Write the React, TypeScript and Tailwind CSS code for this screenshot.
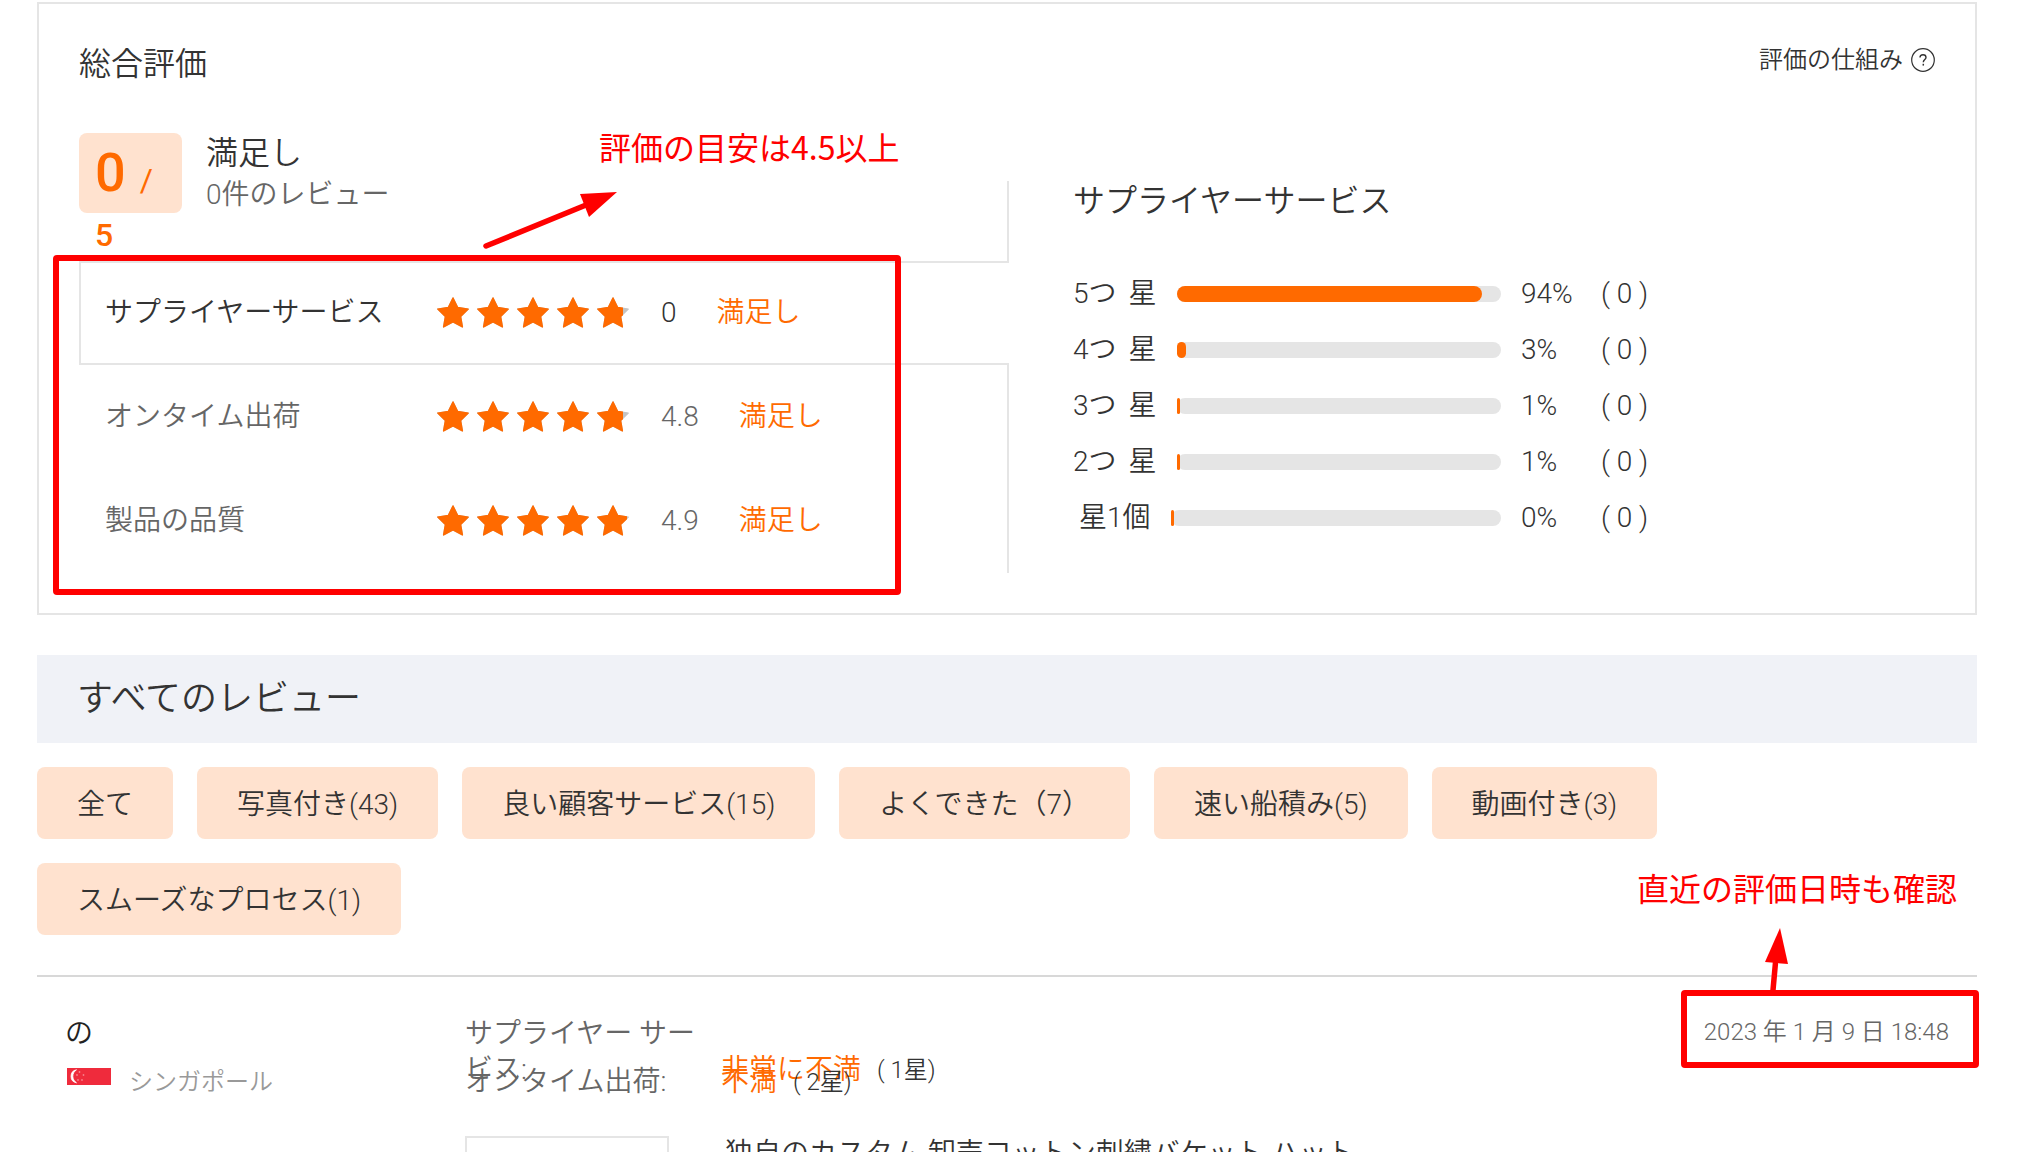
// src/pages/SupplierReviewsPage.tsx

import React from 'react';

// --- Data ---

const ratings = [
    { label: 'サプライヤーサービス', score: '0', text: '満足し', lastStar: 26, active: true },
    { label: 'オンタイム出荷', score: '4.8', text: '満足し', lastStar: 26, active: false },
    { label: '製品の品質', score: '4.9', text: '満足し', lastStar: 30, active: false },
];

const distribution = [
    { count: '5つ', unit: '星', percent: 94 },
    { count: '4つ', unit: '星', percent: 3 },
    { count: '3つ', unit: '星', percent: 1 },
    { count: '2つ', unit: '星', percent: 1 },
    { count: '星1個', unit: '', percent: 0 },
];

const filters = [
    '全て',
    '写真付き(43)',
    '良い顧客サービス(15)',
    'よくできた（7）',
    '速い船積み(5)',
    '動画付き(3)',
    'スムーズなプロセス(1)',
];

const reviewScores = [
    { label: 'サプライヤー サービス:', value: '非常に不満', stars: '( 1星)', offset: true },
    { label: 'オンタイム出荷:', value: '不満', stars: '( 2星)', offset: false },
];

// --- Icons ---

const STAR_POINTS = '16,1 20.7,10.5 31.2,12.1 23.6,19.5 25.4,29.9 16,25 6.6,29.9 8.4,19.5 0.8,12.1 11.3,10.5';

// fill is how much of the 32px star is coloured, from the left
const Star = ({ fill }: { fill: number }) => (
    <svg width="32" height="32" viewBox="0 0 32 32" aria-hidden="true">
        <polygon points={STAR_POINTS} fill="#c4c4c4" stroke="#c4c4c4" strokeWidth="1.4" strokeLinejoin="round" />
        <svg width={fill} height="32" viewBox={`0 0 ${fill} 32`}>
            <polygon points={STAR_POINTS} fill="#ff6a00" stroke="#ff6a00" strokeWidth="1.4" strokeLinejoin="round" />
        </svg>
    </svg>
);

const HelpIcon = () => (
    <svg width="24" height="24" viewBox="0 0 24 24" fill="none" stroke="#333333" aria-hidden="true">
        <circle cx="12" cy="12" r="11.3" strokeWidth="1.2" />
        <path d="M9 9.6C9 7.8 10.3 6.7 12 6.7S15 7.8 15 9.4C15 11.4 12.3 11.6 12.3 14.2" strokeWidth="1.4" />
        <path d="M12.3 15.8V17.6" strokeWidth="1.5" />
    </svg>
);

const SingaporeFlag = () => (
    <svg width="44" height="17" viewBox="0 0 44 17" role="img" aria-label="Singapore">
        <rect width="44" height="17" fill="#ef2b3c" />
        <path d="M9.5 1.8A6.6 6.6 0 0 0 9.5 14.8A7.6 7.6 0 0 1 9.5 1.8Z" fill="#ffffff" stroke="#ffffff" strokeWidth="0.8" />
        <g fill="#f67f89">
            <circle cx="12.5" cy="4" r="0.9" />
            <circle cx="16.5" cy="7" r="0.9" />
            <circle cx="15" cy="12" r="0.9" />
            <circle cx="11" cy="12" r="0.9" />
            <circle cx="10" cy="7" r="0.9" />
        </g>
    </svg>
);

// --- Sections ---

const RatingList = () => (
    <div className="relative">
        <ul>
            {ratings.map((item) => (
                <li
                    key={item.label}
                    className={
                        item.active
                            ? 'relative -mr-0.5 flex h-[104px] items-center border-2 border-r-0 border-[#e5e5e5] bg-white pl-6 text-[#333333]'
                            : 'flex h-[104px] items-center border-l-2 border-transparent pl-6 text-[#666666]'
                    }
                >
                    <span className="w-[332px] leading-10">{item.label}</span>
                    <span className="flex w-[224px] gap-2">
                        {[0, 1, 2, 3, 4].map((n) => (
                            <Star key={n} fill={n === 4 ? item.lastStar : 32} />
                        ))}
                    </span>
                    <span className="mr-10">{item.score}</span>
                    <span className="text-[#ff6a00]">{item.text}</span>
                </li>
            ))}
        </ul>
        {/* highlight frame */}
        <div className="absolute -top-1.5 -left-[26px] h-[340px] w-[848px] rounded-sm border-6 border-[#ff0000]"></div>
    </div>
);

const Distribution = () => (
    <div className="mt-12 w-1/2 border-l-2 border-[#e5e5e5] pl-16 text-[#333333]">
        <h3 className="text-[32px] leading-10">サプライヤーサービス</h3>
        <ul className="mt-[45px]">
            {distribution.map((row) => (
                <li key={row.count} className="flex h-14 items-center">
                    <div className="flex w-[428px] items-center">
                        <span className={row.unit ? 'mr-3' : 'ml-1.5'}>{row.count}</span>
                        <span>{row.unit}</span>
                        <div className="ml-5 h-4 flex-1 rounded-full bg-[#e5e5e5]">
                            <div
                                className="h-4 min-w-[3px] rounded-full bg-[#ff6a00]"
                                style={{ width: `${row.percent}%` }}
                            ></div>
                        </div>
                    </div>
                    <span className="ml-5 w-20">{row.percent}%</span>
                    <span>( 0 )</span>
                </li>
            ))}
        </ul>
    </div>
);

const Summary = () => (
    <section className="border-2 border-[#e5e5e5] px-10 pb-10">
        <div className="flex items-start justify-between pt-10 pb-[49px] text-[#333333]">
            <h2 className="text-[32px] leading-10">総合評価</h2>
            <a href="#help" className="flex items-center gap-2 text-2xl leading-8">
                評価の仕組み
                <HelpIcon />
            </a>
        </div>
        <div className="flex">
            <div className="relative w-1/2">
                <div className="flex h-32 items-start">
                    <div className="h-20 w-[103px] rounded-lg bg-[#ffe2cf] px-4 text-[32px] leading-11 font-medium text-[#ff6a00]">
                        <span className="mr-1.5 text-[54px] leading-[80px]">0</span> <span className="font-normal">/</span>
                        <br />5
                    </div>
                    <div className="ml-6">
                        <p className="text-[32px] leading-10 text-[#333333]">満足し</p>
                        <p className="leading-11 text-[#666666]">0件のレビュー</p>
                    </div>
                </div>
                <RatingList />
                <p className="absolute -top-[3px] left-[520px] font-['Noto_Sans_CJK_JP',sans-serif] text-[32px] leading-8 font-normal whitespace-nowrap text-[#ff0000]">
                    評価の目安は4.5以上
                </p>
                <svg className="absolute top-14 left-[400px]" width="142" height="62" viewBox="0 0 142 62" aria-hidden="true">
                    <path d="M7 57L107 16" stroke="#ff0000" strokeWidth="5.5" strokeLinecap="round" />
                    <polygon points="138,3 101,5 110,28" fill="#ff0000" />
                </svg>
            </div>
            <Distribution />
        </div>
    </section>
);

const Review = () => (
    <article className="relative mt-10 flex border-t-2 border-[#d8d8d8] px-7 pt-[39px]">
        <div className="w-[400px]">
            <p className="leading-9 text-[#222222]">の</p>
            <div className="mt-3 ml-0.5 flex items-start text-2xl leading-9 text-[#999999]">
                <span className="mt-1 mr-[18px]">
                    <SingaporeFlag />
                </span>
                シンガポール
            </div>
        </div>
        <div className="flex-1">
            <dl>
                {reviewScores.map((score) => (
                    <div key={score.label} className="flex h-12 items-start leading-9">
                        <dt className="w-60 text-[#666666]">{score.label}</dt>
                        <dd className={score.offset ? 'mt-9 ml-4 flex items-center' : 'ml-4 flex items-center'}>
                            <span className="text-[#ff6a00]">{score.value}</span>
                            <span className="ml-4 text-2xl leading-9 text-[#333333]">{score.stars}</span>
                        </dd>
                    </div>
                ))}
            </dl>
            <div className="mt-6 flex">
                <div className="h-[204px] w-[204px] border-2 border-[#e5e5e5]"></div>
                <a href="#product" className="ml-14 leading-9 text-[#333333]">
                    独自のカスタム 卸売コットン刺繍バケット ハット
                </a>
            </div>
        </div>
        <div className="relative self-start text-2xl leading-8 whitespace-nowrap text-[#666666]">
            <time dateTime="2023-01-09T18:48">2023 年 1 月 9 日 18:48</time>
            <div className="absolute -top-[26px] -right-[30px] h-[78px] w-[298px] rounded-sm border-6 border-[#ff0000]"></div>
            <p className="absolute -top-[149px] -right-2 font-['Noto_Sans_CJK_JP',sans-serif] text-[32px] leading-10 font-normal text-[#ff0000]">
                直近の評価日時も確認
            </p>
            <svg className="absolute -top-[91px] right-[156px]" width="32" height="68" viewBox="0 0 32 68" aria-hidden="true">
                <path d="M12 65L15 32" stroke="#ff0000" strokeWidth="5.5" strokeLinecap="round" />
                <polygon points="19,3 4,37 27,39" fill="#ff0000" />
            </svg>
        </div>
    </article>
);

// --- Page ---

const App = () => {
    return (
        <main
            lang="ja"
            className="h-screen overflow-hidden bg-white pt-0.5 pr-[45px] pl-[37px] font-['Roboto','Noto_Sans_CJK_JP',sans-serif] text-[28px] font-[350]"
        >
            <Summary />
            <h2 className="mt-10 bg-[#f0f2f7] px-10 py-6 text-[36px] leading-10 text-[#333333]">すべてのレビュー</h2>
            <div className="mt-6 flex flex-wrap gap-6">
                {filters.map((name) => (
                    <button key={name} type="button" className="rounded-lg bg-[#ffe2cf] px-10 pt-[18px] pb-[14px] leading-10 text-[#333333]">
                        {name}
                    </button>
                ))}
            </div>
            <Review />
        </main>
    );
};

export default App;
